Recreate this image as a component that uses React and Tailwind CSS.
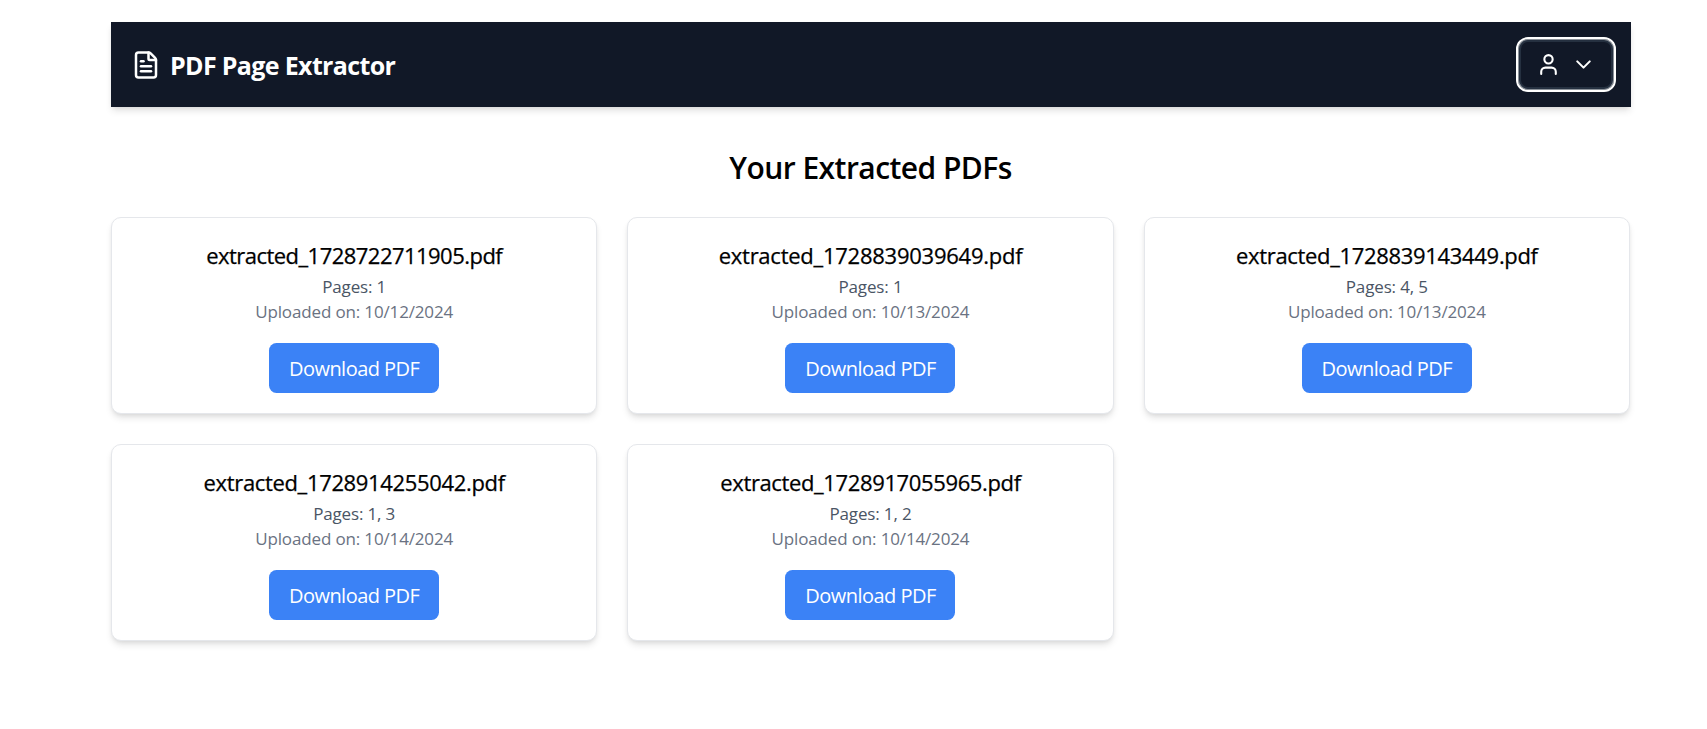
import { FileText, User, ChevronDown } from "lucide-react";

const files = [
  { name: "extracted_1728722711905.pdf", pages: "1", date: "10/12/2024", tracking: "tracking-[-0.53px]" },
  { name: "extracted_1728839039649.pdf", pages: "1", date: "10/13/2024", tracking: "tracking-[-0.25px]" },
  { name: "extracted_1728839143449.pdf", pages: "4, 5", date: "10/13/2024", tracking: "tracking-[-0.32px]" },
  { name: "extracted_1728914255042.pdf", pages: "1, 3", date: "10/14/2024", tracking: "tracking-[-0.34px]" },
  { name: "extracted_1728917055965.pdf", pages: "1, 2", date: "10/14/2024", tracking: "tracking-[-0.37px]" },
];

function FileCard({ file }) {
  return (
    <div className="flex h-[197px] flex-col items-center rounded-[10px] border border-gray-200 bg-white pt-5 shadow-[0_5px_7px_-1px_rgba(0,0,0,0.1),0_2px_5px_-2px_rgba(0,0,0,0.1)]">
      <h3 className={`text-[22px] leading-[35px] font-medium text-black [-webkit-text-stroke:0.25px_black] ${file.tracking}`}>{file.name}</h3>
      <p className="mt-px text-[17px] leading-[25px] tracking-[-0.15px] text-gray-600">Pages: {file.pages}</p>
      <p className="text-[17px] leading-[25px] tracking-[-0.15px] text-gray-500">Uploaded on: {file.date}</p>
      <button className="mt-[19px] h-[50px] w-[170px] rounded-[7.5px] bg-[#3b82f6] pt-px text-[20px] tracking-[-0.53px] text-white">
        Download PDF
      </button>
    </div>
  );
}

export default function App() {
  return (
    <div className="min-h-[729px] bg-white pt-[22px] pl-[111px] font-['Open_Sans','Noto_Sans',sans-serif]">
      <header className="flex h-[85px] w-[1520px] items-center justify-between bg-[#111827] pr-[15px] pl-5 text-white shadow-[0_5px_7px_-1px_rgba(0,0,0,0.1),0_2px_5px_-2px_rgba(0,0,0,0.1)]">
        <div className="flex items-center gap-[9px]">
          <FileText size={30} />
          <span className="pt-0.5 text-[25px] leading-[35px] font-bold tracking-[-0.65px]">PDF Page Extractor</span>
        </div>
        <button className="flex h-[55px] w-[100px] items-center justify-center gap-[10px] rounded-[12px] border-2 border-white shadow-[inset_0_0_0_1px_#8b9199,inset_0_0_0_3px_#253040]">
          <User size={25} />
          <ChevronDown size={25} />
        </button>
      </header>
      <main className="w-[1519px] pt-[38px]">
        <h1 className="text-center text-[30px] leading-[45px] font-semibold tracking-[-0.55px] text-black">Your Extracted PDFs</h1>
        <div className="mt-[27px] grid grid-cols-3 gap-[30px]">
          {files.map((file) => (
            <FileCard key={file.name} file={file} />
          ))}
        </div>
      </main>
    </div>
  );
}
